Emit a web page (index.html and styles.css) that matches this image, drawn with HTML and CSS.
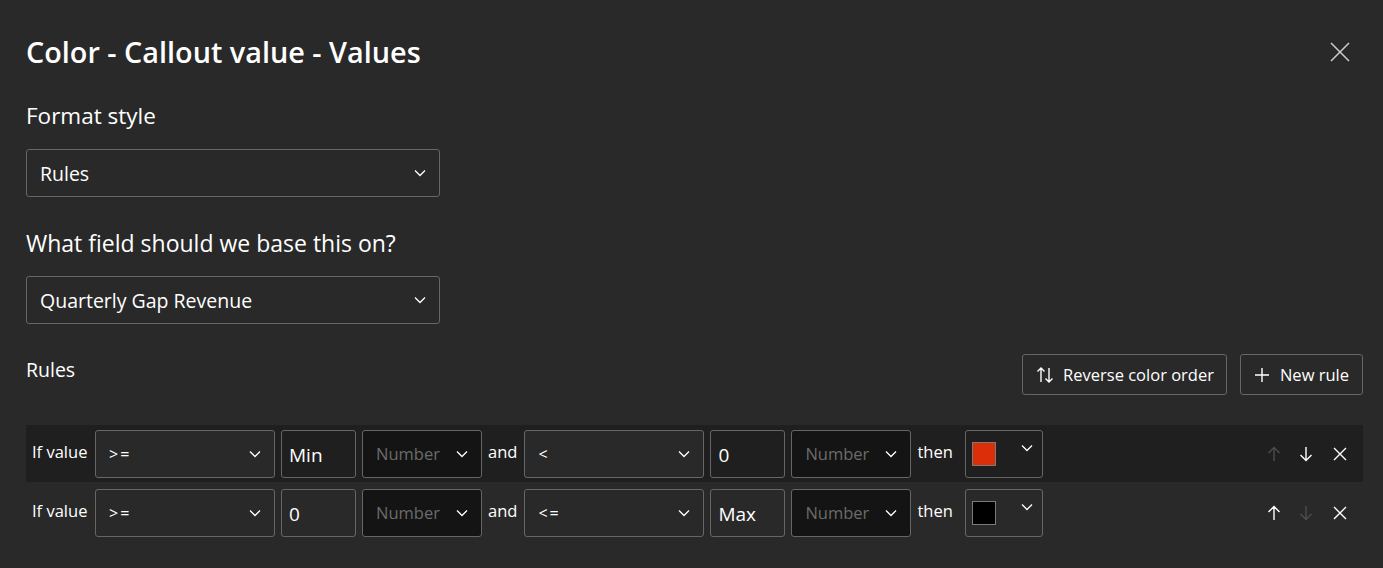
FILE: index.html
```html
<!DOCTYPE html>
<html lang="en">
<head>
<meta charset="utf-8">
<title>Color - Callout value - Values</title>
<link rel="stylesheet" href="styles.css">
</head>
<body>
<div class="dialog">
  <header class="head">
    <h1 class="title">Color - Callout value - Values</h1>
    <button class="close" aria-label="Close">
      <svg width="20" height="20" viewBox="0 0 20 20"><path d="M1 1L19 19M19 1L1 19" stroke="#cfcfcf" stroke-width="1.5" fill="none"/></svg>
    </button>
  </header>

  <div class="field-label">Format style</div>
  <div class="select big">
    <span>Rules</span>
    <svg class="chev" width="12" height="8" viewBox="0 0 12 8"><path d="M1 1.5L6 6.5L11 1.5" stroke="#fff" stroke-width="1.3" fill="none"/></svg>
  </div>

  <div class="field-label second">What field should we base this on?</div>
  <div class="select big">
    <span>Quarterly Gap Revenue</span>
    <svg class="chev" width="12" height="8" viewBox="0 0 12 8"><path d="M1 1.5L6 6.5L11 1.5" stroke="#fff" stroke-width="1.3" fill="none"/></svg>
  </div>

  <div class="rules-head">
    <div class="rules-title">Rules</div>
    <div class="actions">
      <button class="btn">
        <svg width="18" height="18" viewBox="0 0 18 18"><path d="M5 16V2M1.5 5.5L5 2L8.5 5.5M13 2V16M9.5 12.5L13 16L16.5 12.5" stroke="#fff" stroke-width="1.4" fill="none"/></svg>
        <span>Reverse color order</span>
      </button>
      <button class="btn new">
        <svg width="14" height="14" viewBox="0 0 14 14"><path d="M7 0V14M0 7H14" stroke="#fff" stroke-width="1.4" fill="none"/></svg>
        <span>New rule</span>
      </button>
    </div>
  </div>

  <div class="rule active">
    <span class="word first">If value</span>
    <div class="select op"><span>&gt;=</span><svg class="chev" width="12" height="8" viewBox="0 0 12 8"><path d="M1 1.5L6 6.5L11 1.5" stroke="#fff" stroke-width="1.3" fill="none"/></svg></div>
    <div class="input">Min</div>
    <div class="select num"><span>Number</span><svg class="chev" width="12" height="8" viewBox="0 0 12 8"><path d="M1 1.5L6 6.5L11 1.5" stroke="#fff" stroke-width="1.3" fill="none"/></svg></div>
    <span class="word and">and</span>
    <div class="select op"><span>&lt;</span><svg class="chev" width="12" height="8" viewBox="0 0 12 8"><path d="M1 1.5L6 6.5L11 1.5" stroke="#fff" stroke-width="1.3" fill="none"/></svg></div>
    <div class="input">0</div>
    <div class="select num"><span>Number</span><svg class="chev" width="12" height="8" viewBox="0 0 12 8"><path d="M1 1.5L6 6.5L11 1.5" stroke="#fff" stroke-width="1.3" fill="none"/></svg></div>
    <span class="word then">then</span>
    <div class="picker"><span class="swatch red"></span><svg class="chev up" width="12" height="8" viewBox="0 0 12 8"><path d="M1 1.5L6 6.5L11 1.5" stroke="#fff" stroke-width="1.3" fill="none"/></svg></div>
    <div class="tools">
      <button class="tool disabled" aria-label="Move up"><svg width="14" height="16" viewBox="0 0 14 16"><path d="M7 15V1.5M1.5 7L7 1.5L12.5 7" stroke="currentColor" stroke-width="1.4" fill="none"/></svg></button>
      <button class="tool" aria-label="Move down"><svg width="14" height="16" viewBox="0 0 14 16"><path d="M7 1V14.5M1.5 9L7 14.5L12.5 9" stroke="currentColor" stroke-width="1.4" fill="none"/></svg></button>
      <button class="tool del" aria-label="Delete"><svg width="14" height="14" viewBox="0 0 14 14"><path d="M1 1L13 13M13 1L1 13" stroke="currentColor" stroke-width="1.4" fill="none"/></svg></button>
    </div>
  </div>

  <div class="rule">
    <span class="word first">If value</span>
    <div class="select op"><span>&gt;=</span><svg class="chev" width="12" height="8" viewBox="0 0 12 8"><path d="M1 1.5L6 6.5L11 1.5" stroke="#fff" stroke-width="1.3" fill="none"/></svg></div>
    <div class="input">0</div>
    <div class="select num"><span>Number</span><svg class="chev" width="12" height="8" viewBox="0 0 12 8"><path d="M1 1.5L6 6.5L11 1.5" stroke="#fff" stroke-width="1.3" fill="none"/></svg></div>
    <span class="word and">and</span>
    <div class="select op"><span>&lt;=</span><svg class="chev" width="12" height="8" viewBox="0 0 12 8"><path d="M1 1.5L6 6.5L11 1.5" stroke="#fff" stroke-width="1.3" fill="none"/></svg></div>
    <div class="input">Max</div>
    <div class="select num"><span>Number</span><svg class="chev" width="12" height="8" viewBox="0 0 12 8"><path d="M1 1.5L6 6.5L11 1.5" stroke="#fff" stroke-width="1.3" fill="none"/></svg></div>
    <span class="word then">then</span>
    <div class="picker"><span class="swatch black"></span><svg class="chev up" width="12" height="8" viewBox="0 0 12 8"><path d="M1 1.5L6 6.5L11 1.5" stroke="#fff" stroke-width="1.3" fill="none"/></svg></div>
    <div class="tools">
      <button class="tool" aria-label="Move up"><svg width="14" height="16" viewBox="0 0 14 16"><path d="M7 15V1.5M1.5 7L7 1.5L12.5 7" stroke="currentColor" stroke-width="1.4" fill="none"/></svg></button>
      <button class="tool disabled" aria-label="Move down"><svg width="14" height="16" viewBox="0 0 14 16"><path d="M7 1V14.5M1.5 9L7 14.5L12.5 9" stroke="currentColor" stroke-width="1.4" fill="none"/></svg></button>
      <button class="tool del" aria-label="Delete"><svg width="14" height="14" viewBox="0 0 14 14"><path d="M1 1L13 13M13 1L1 13" stroke="currentColor" stroke-width="1.4" fill="none"/></svg></button>
    </div>
  </div>
</div>
</body>
</html>
```

FILE: styles.css
```css
* { box-sizing: border-box; }
html, body {
  margin: 0;
  height: 100%;
  background: #292929;
}
body {
  color: #ffffff;
  font-family: "Open Sans", "Noto Sans", sans-serif;
  overflow: hidden;
}
.dialog {
  padding: 32px 20px 0 26px;
}
.head {
  display: flex;
  align-items: center;
  justify-content: space-between;
  height: 40px;
}
.title {
  margin: 0;
  font-size: 28.8px;
  font-weight: 600;
  line-height: 40px;
}
.close {
  background: none;
  border: 0;
  padding: 0;
  width: 40px;
  height: 40px;
  display: flex;
  align-items: center;
  justify-content: center;
  margin-right: 3px;
}
.field-label {
  margin-top: 29px;
  font-size: 22.5px;
  line-height: 30px;
  margin-bottom: 18px;
}
.field-label.second {
  margin-top: 31px;
  margin-bottom: 18px;
  font-size: 23px;
}
.select {
  display: flex;
  align-items: center;
  justify-content: space-between;
  border: 1px solid #666666;
  border-radius: 3px;
  background: #292929;
}
.select.big {
  width: 414px;
  height: 48px;
  padding: 0 13px 0 13px;
  font-size: 19.5px;
}
.rules-head {
  margin-top: 30px;
  display: flex;
  justify-content: space-between;
  align-items: flex-start;
}
.rules-title {
  font-size: 19.5px;
  line-height: 30px;
  margin-top: 1px;
}
.actions {
  display: flex;
  gap: 13px;
}
.btn {
  display: flex;
  align-items: center;
  gap: 9px;
  height: 41px;
  padding: 0 12px 0 13px;
  background: #292929;
  border: 1px solid #666666;
  border-radius: 3px;
  color: #ffffff;
  font-family: inherit;
  font-size: 16.5px;
}
.btn.new {
  padding: 0 13px 0 14px;
  gap: 11px;
}
.rule {
  display: flex;
  align-items: center;
  gap: 6px;
  height: 57px;
  padding: 0 7px 0 6px;
  margin-top: 2px;
}
.rule.active {
  margin-top: 30px;
  background: #1f1f1f;
}
.word {
  font-size: 16.5px;
  margin-top: -4px;
}
.word.first { width: 57px; }
.word.and { margin-right: 1px; }
.word.then { margin-right: 6px; }
.select.op {
  width: 180px;
  height: 48px;
  padding: 0 13px 0 13px;
  font-size: 16px;
}
.select.op span { letter-spacing: 2px; }
.select.num {
  width: 120px;
  height: 48px;
  padding: 0 13px 0 13px;
  background: #141414;
  color: #6b6b6b;
  font-size: 16.5px;
}
.input {
  width: 75px;
  height: 48px;
  display: flex;
  align-items: center;
  padding: 3px 7px 0;
  border: 1px solid #666666;
  border-radius: 3px;
  font-size: 19px;
}
.picker {
  width: 78px;
  height: 48px;
  border: 1px solid #666666;
  border-radius: 3px;
  display: flex;
  align-items: center;
  justify-content: space-between;
  padding: 0 9px 0 6px;
}
.swatch {
  width: 24px;
  height: 24px;
  border: 1px solid #7a7a7a;
}
.swatch.red { background: #dd2e0a; }
.swatch.black { background: #000000; }
.chev.up { margin-top: -12px; }
.tools {
  margin-left: auto;
  display: flex;
  align-items: center;
}
.tool {
  width: 32px;
  height: 32px;
  border: 0;
  padding: 0;
  background: none;
  color: #ffffff;
  display: flex;
  align-items: center;
  justify-content: center;
}
.tool.disabled { color: #4d4d4d; }
.tool.del { margin-left: 2px; }
```
